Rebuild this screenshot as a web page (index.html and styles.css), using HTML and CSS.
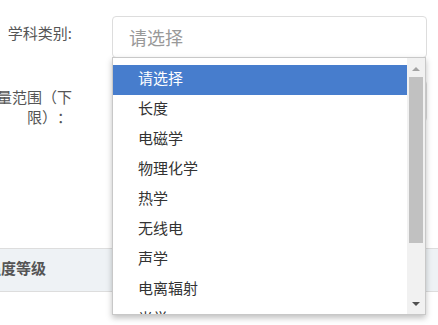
FILE: index.html
```html
<!DOCTYPE html>
<html lang="zh-CN">
<head>
    <meta charset="UTF-8">
    <title>学科类别</title>
    <link rel="stylesheet" href="styles.css">
</head>
<body>
    <form class="form">
        <div class="row">
            <label class="lbl">学科类别:</label>
            <div class="field">
                <div class="select">请选择</div>
                <div class="dropdown">
                    <ul class="options">
                        <li class="active">请选择</li>
                        <li>长度</li>
                        <li>电磁学</li>
                        <li>物理化学</li>
                        <li>热学</li>
                        <li>无线电</li>
                        <li>声学</li>
                        <li>电离辐射</li>
                        <li>光学</li>
                    </ul>
                    <div class="scrollbar">
                        <span class="arrow up"></span>
                        <span class="thumb"></span>
                        <span class="arrow down"></span>
                    </div>
                </div>
            </div>
        </div>
        <div class="row second">
            <label class="lbl">测量范围（下限）：</label>
            <div class="field">
                <div class="select">请选择</div>
            </div>
        </div>
    </form>
    <div class="thead"><span>强度等级</span></div>
</body>
</html>
```

FILE: styles.css
```css
* {
    box-sizing: border-box;
}
html, body {
    height: 325px;
}
body {
    margin: 0;
    font-family: "Noto Sans CJK SC", "Noto Sans", sans-serif;
    background: #fff;
    text-spacing-trim: space-all;
}
.form {
    padding-top: 16px;
    margin: 0;
}
.row {
    display: flex;
    margin-left: -28px;
}
.row.second {
    margin-top: 22px;
}
.lbl {
    width: 100px;
    flex: none;
    text-align: right;
    font-size: 15px;
    line-height: 20px;
    color: #555;
    padding-top: 7px;
}
.field {
    position: relative;
    margin-left: 40px;
    width: 315px;
}
.select {
    height: 42px;
    border: 1px solid #ddd;
    border-radius: 4px;
    padding-left: 16px;
    font-size: 18px;
    line-height: 40px;
    color: #999;
}
.dropdown {
    position: absolute;
    top: 41px;
    left: 0;
    width: 314px;
    height: 258px;
    background: #fff;
    border: 1px solid #c8c8c8;
    box-shadow: 0 3px 6px rgba(0,0,0,0.25);
    overflow: hidden;
    z-index: 5;
}
.options {
    list-style: none;
    margin: 0;
    padding: 7px 0 0;
    width: 295px;
}
.options li {
    height: 30px;
    line-height: 26px;
    padding-left: 25px;
    font-size: 15px;
    color: #333;
}
.options li.active {
    background: #477dcd;
    color: #fff;
}
.scrollbar {
    position: absolute;
    top: 0;
    right: 0;
    bottom: 0;
    width: 18px;
    background: #f1f1f1;
}
.thumb {
    position: absolute;
    top: 19px;
    left: 2px;
    width: 14px;
    height: 166px;
    background: #c1c1c1;
}
.arrow {
    position: absolute;
    left: 5px;
    width: 0;
    height: 0;
    border-left: 4px solid transparent;
    border-right: 4px solid transparent;
}
.arrow.up {
    top: 9px;
    border-bottom: 4px solid #a3a3a3;
}
.arrow.down {
    bottom: 8px;
    border-top: 4px solid #505050;
}
.thead {
    margin-top: 121px;
    height: 44px;
    background: #eef2f5;
    border-top: 1px solid #ddd;
    border-bottom: 1px solid #ddd;
    font-size: 15px;
    font-weight: bold;
    color: #555;
    line-height: 38px;
    white-space: nowrap;
}
.thead span {
    margin-left: -14px;
}
```
